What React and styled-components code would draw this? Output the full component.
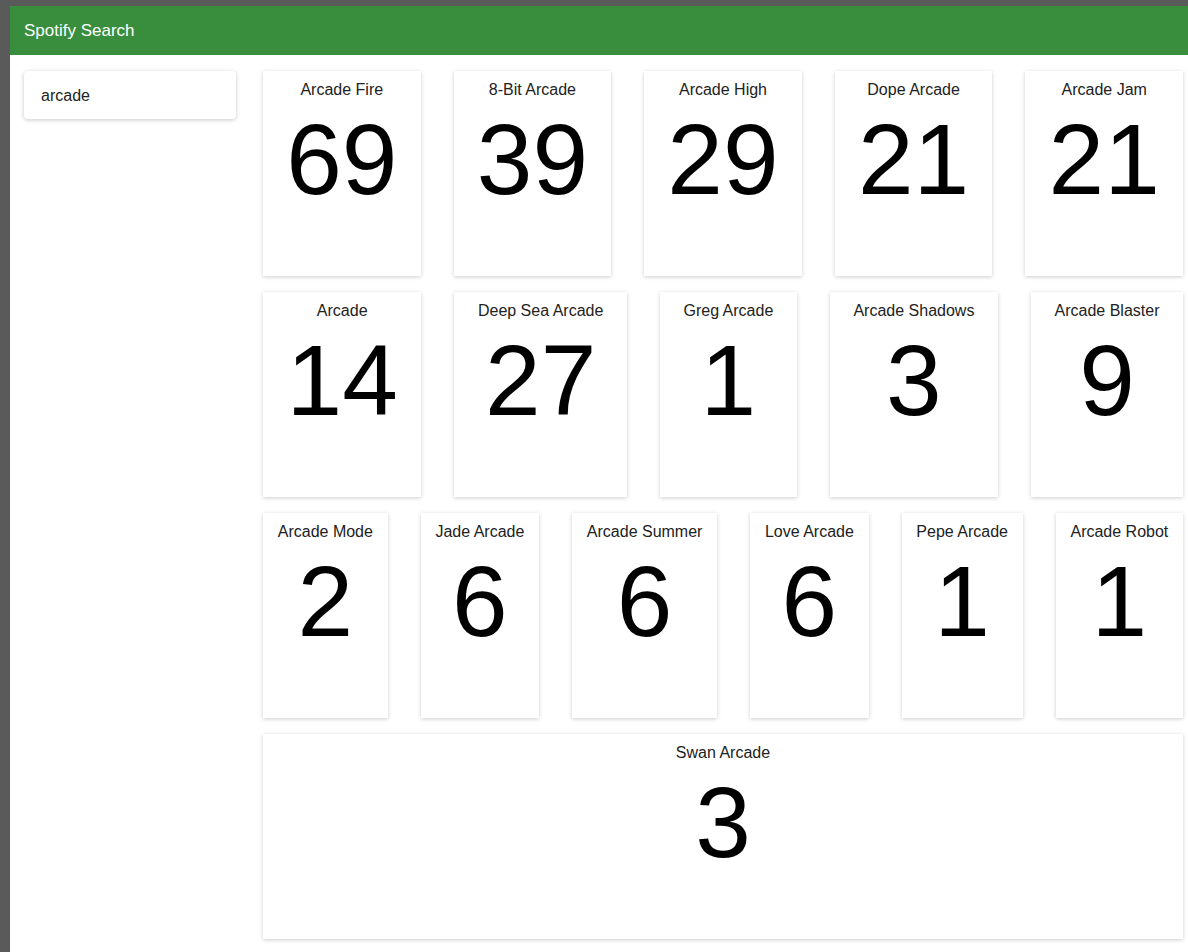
import styled, { createGlobalStyle } from "styled-components";

const artists = [
  { name: "Arcade Fire", popularity: 69 },
  { name: "8-Bit Arcade", popularity: 39 },
  { name: "Arcade High", popularity: 29 },
  { name: "Dope Arcade", popularity: 21 },
  { name: "Arcade Jam", popularity: 21 },
  { name: "Arcade", popularity: 14 },
  { name: "Deep Sea Arcade", popularity: 27 },
  { name: "Greg Arcade", popularity: 1 },
  { name: "Arcade Shadows", popularity: 3 },
  { name: "Arcade Blaster", popularity: 9 },
  { name: "Arcade Mode", popularity: 2 },
  { name: "Jade Arcade", popularity: 6 },
  { name: "Arcade Summer", popularity: 6 },
  { name: "Love Arcade", popularity: 6 },
  { name: "Pepe Arcade", popularity: 1 },
  { name: "Arcade Robot", popularity: 1 },
  { name: "Swan Arcade", popularity: 3 },
];

export default function App() {
  return (
    <>
      <GlobalStyle />
      <Page>
        <Header>Spotify Search</Header>
        <Main>
          <Sidebar>
            <SearchBox>
              <input type="text" defaultValue="arcade" />
            </SearchBox>
          </Sidebar>
          <Results>
            {artists.map((artist) => (
              <Card key={artist.name}>
                <p className="name">{artist.name}</p>
                <div className="popularity">{artist.popularity}</div>
              </Card>
            ))}
          </Results>
        </Main>
      </Page>
    </>
  );
}

const GlobalStyle = createGlobalStyle`
  html, body {
    margin: 0;
    height: 100%;
    background: #5a5a5a;
    font-family: "Liberation Sans", Arial, sans-serif;
  }

  #root {
    height: 100%;
  }
`;

const Page = styled.div`
  margin: 6px 0 0 10px;
  min-height: calc(100% - 6px);
  background: #ffffff;
  display: flex;
  flex-direction: column;
`;

const Header = styled.header`
  height: 49px;
  background: #388e3c;
  color: #ffffff;
  font-size: 17px;
  padding-left: 14px;

  display: flex;
  align-items: center;
`;

const Main = styled.div`
  display: flex;
  align-items: flex-start;
`;

const Sidebar = styled.aside`
  width: 253px;
  flex-shrink: 0;
  padding: 16px 27px 0 14px;
  box-sizing: border-box;
`;

const SearchBox = styled.div`
  height: 48px;
  background: #ffffff;
  border-radius: 4px;
  box-shadow: 0 1px 4px rgba(0, 0, 0, 0.22);

  display: flex;
  align-items: center;

  input {
    width: 100%;
    border: none;
    outline: none;
    background: transparent;
    padding: 2px 17px 0;
    font-family: "Liberation Sans", Arial, sans-serif;
    font-size: 16px;
    color: #222222;
  }
`;

const Results = styled.section`
  flex: 1;
  display: flex;
  flex-wrap: wrap;
  column-gap: 33px;
  row-gap: 16px;
  padding: 16px 5px 11px 0;
`;

const Card = styled.div`
  flex: 1 1 auto;
  height: 205px;
  padding: 10px 10px 0;
  box-sizing: border-box;
  background: #ffffff;
  box-shadow: 0 1px 4px rgba(0, 0, 0, 0.2);
  text-align: center;

  .name {
    margin: 0;
    font-size: 16px;
    color: #222222;
  }

  .popularity {
    margin-top: 3px;
    font-size: 100px;
    color: #000000;
  }
`;
